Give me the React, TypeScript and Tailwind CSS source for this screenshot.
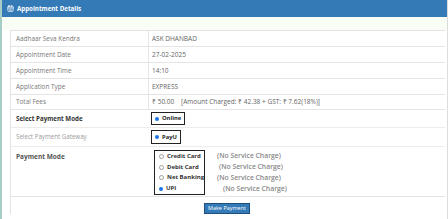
import { CalendarDays } from 'lucide-react';

const rows = [
  { label: 'Aadhaar Seva Kendra', value: 'ASK DHANBAD' },
  { label: 'Appointment Date', value: '27-02-2025' },
  { label: 'Appointment Time', value: '14:10' },
  { label: 'Application Type', value: 'EXPRESS' },
];

const modes = [
  { name: 'Credit Card', checked: false, gap: 'ml-[12px]' },
  { name: 'Debit Card', checked: false, gap: 'ml-[14px]' },
  { name: 'Net Banking', checked: false, gap: 'ml-[12px]' },
  { name: 'UPI', checked: true, gap: 'ml-[18px]' },
];

function Radio({ checked }: { checked: boolean }) {
  return checked ? (
    <span className="w-[4px] h-[4px] rounded-full bg-[#1a73e8] shrink-0" />
  ) : (
    <span className="w-[5px] h-[5px] rounded-full bg-white border border-[#a0a0a0] shrink-0" />
  );
}

export default function App() {
  return (
    <div className="w-[448px] h-[219px] bg-white flex overflow-hidden" style={{ fontFamily: '"Open Sans", "Liberation Sans", sans-serif' }}>
      <div className="w-[2px] bg-[#a8cdc6] shrink-0" />
      <div className="flex-1 flex flex-col border-r border-[#dcdcdc]">
        {/* Header */}
        <div className="h-[17px] bg-[#337ab7] flex items-center pl-[5px] gap-[3px] text-white text-[6.2px] font-bold">
          <CalendarDays className="w-[7px] h-[7px]" strokeWidth={2.5} />
          <span>Appointment Details</span>
        </div>
        <div className="h-[13px] bg-[#f8fdf6]" />

        {/* Details table */}
        <div className="ml-[8px] mr-[2px] border-l border-[#e4e4e4] text-[#777]">
          {rows.map((r) => (
            <div key={r.label} className="flex h-[16px] border-t border-[#e4e4e4]">
              <div className="w-[138px] pl-[5px] flex items-center border-r border-[#e4e4e4] text-[6.4px]">{r.label}</div>
              <div className="pl-[3px] flex items-center text-[6.5px] text-[#666]">{r.value}</div>
            </div>
          ))}
          <div className="flex h-[16px] border-t border-[#e4e4e4] border-b">
            <div className="w-[138px] pl-[5px] flex items-center border-r border-[#e4e4e4] text-[6.4px]">Total Fees</div>
            <div className="pl-[3px] flex items-center whitespace-nowrap text-[6.5px] text-[#666]">
              ₹ 50.00&nbsp;&nbsp;&nbsp;&nbsp;[Amount Charged: ₹ 42.38 + GST: ₹ 7.62(18%)]
            </div>
          </div>

          <div className="flex h-[18px] border-b border-[#ececec]">
            <div className="w-[139px] pl-[5px] flex items-center font-bold text-[#333] text-[6.2px]">Select Payment Mode</div>
            <div className="flex items-center pl-[1px]">
              <div className="h-[13px] flex items-center gap-[3px] px-[3px] border-[1.5px] border-[#222]">
                <Radio checked />
                <span className="font-bold text-[#222] text-[5.8px]">Online</span>
              </div>
            </div>
          </div>

          <div className="flex h-[19px] border-b border-[#ececec]">
            <div className="w-[139px] pl-[5px] flex items-center text-[#9a9a9a] text-[6.2px]">Select Payment Gateway</div>
            <div className="flex items-center pl-[1px]">
              <div className="h-[14px] flex items-center gap-[3px] px-[3px] border-[1.5px] border-[#222]">
                <Radio checked />
                <span className="font-bold text-[#222] text-[5.8px]">PayU</span>
              </div>
            </div>
          </div>

          <div className="flex h-[50px] border-b border-[#e4e4e4]">
            <div className="w-[143px] pl-[5px] pt-[5px] font-bold text-[#555] text-[6.5px]">Payment Mode</div>
            <div className="pt-[3px] flex">
              <div className="w-[51px] h-[45px] border-[1.5px] border-[#222] flex flex-col justify-around pl-[4px]">
                {modes.map((m) => (
                  <div key={m.name} className="flex items-center gap-[3px]">
                    <Radio checked={m.checked} />
                    <span className="font-bold text-[#333] text-[6px] whitespace-nowrap">{m.name}</span>
                  </div>
                ))}
              </div>
              <div className="flex flex-col justify-around h-[45px]">
                {modes.map((m) => (
                  <span key={m.name} className={`${m.gap} font-semibold text-[#888] text-[6.8px] whitespace-nowrap`}>
                    (No Service Charge)
                  </span>
                ))}
              </div>
            </div>
          </div>

          <div className="flex justify-center pt-[6px] pr-[2px]">
            <button className="h-[11px] px-[3px] bg-[#337ab7] border-[1.5px] border-[#1d4f7c] text-white text-[5.5px] leading-none">
              Make Payment
            </button>
          </div>
        </div>
      </div>
    </div>
  );
}
